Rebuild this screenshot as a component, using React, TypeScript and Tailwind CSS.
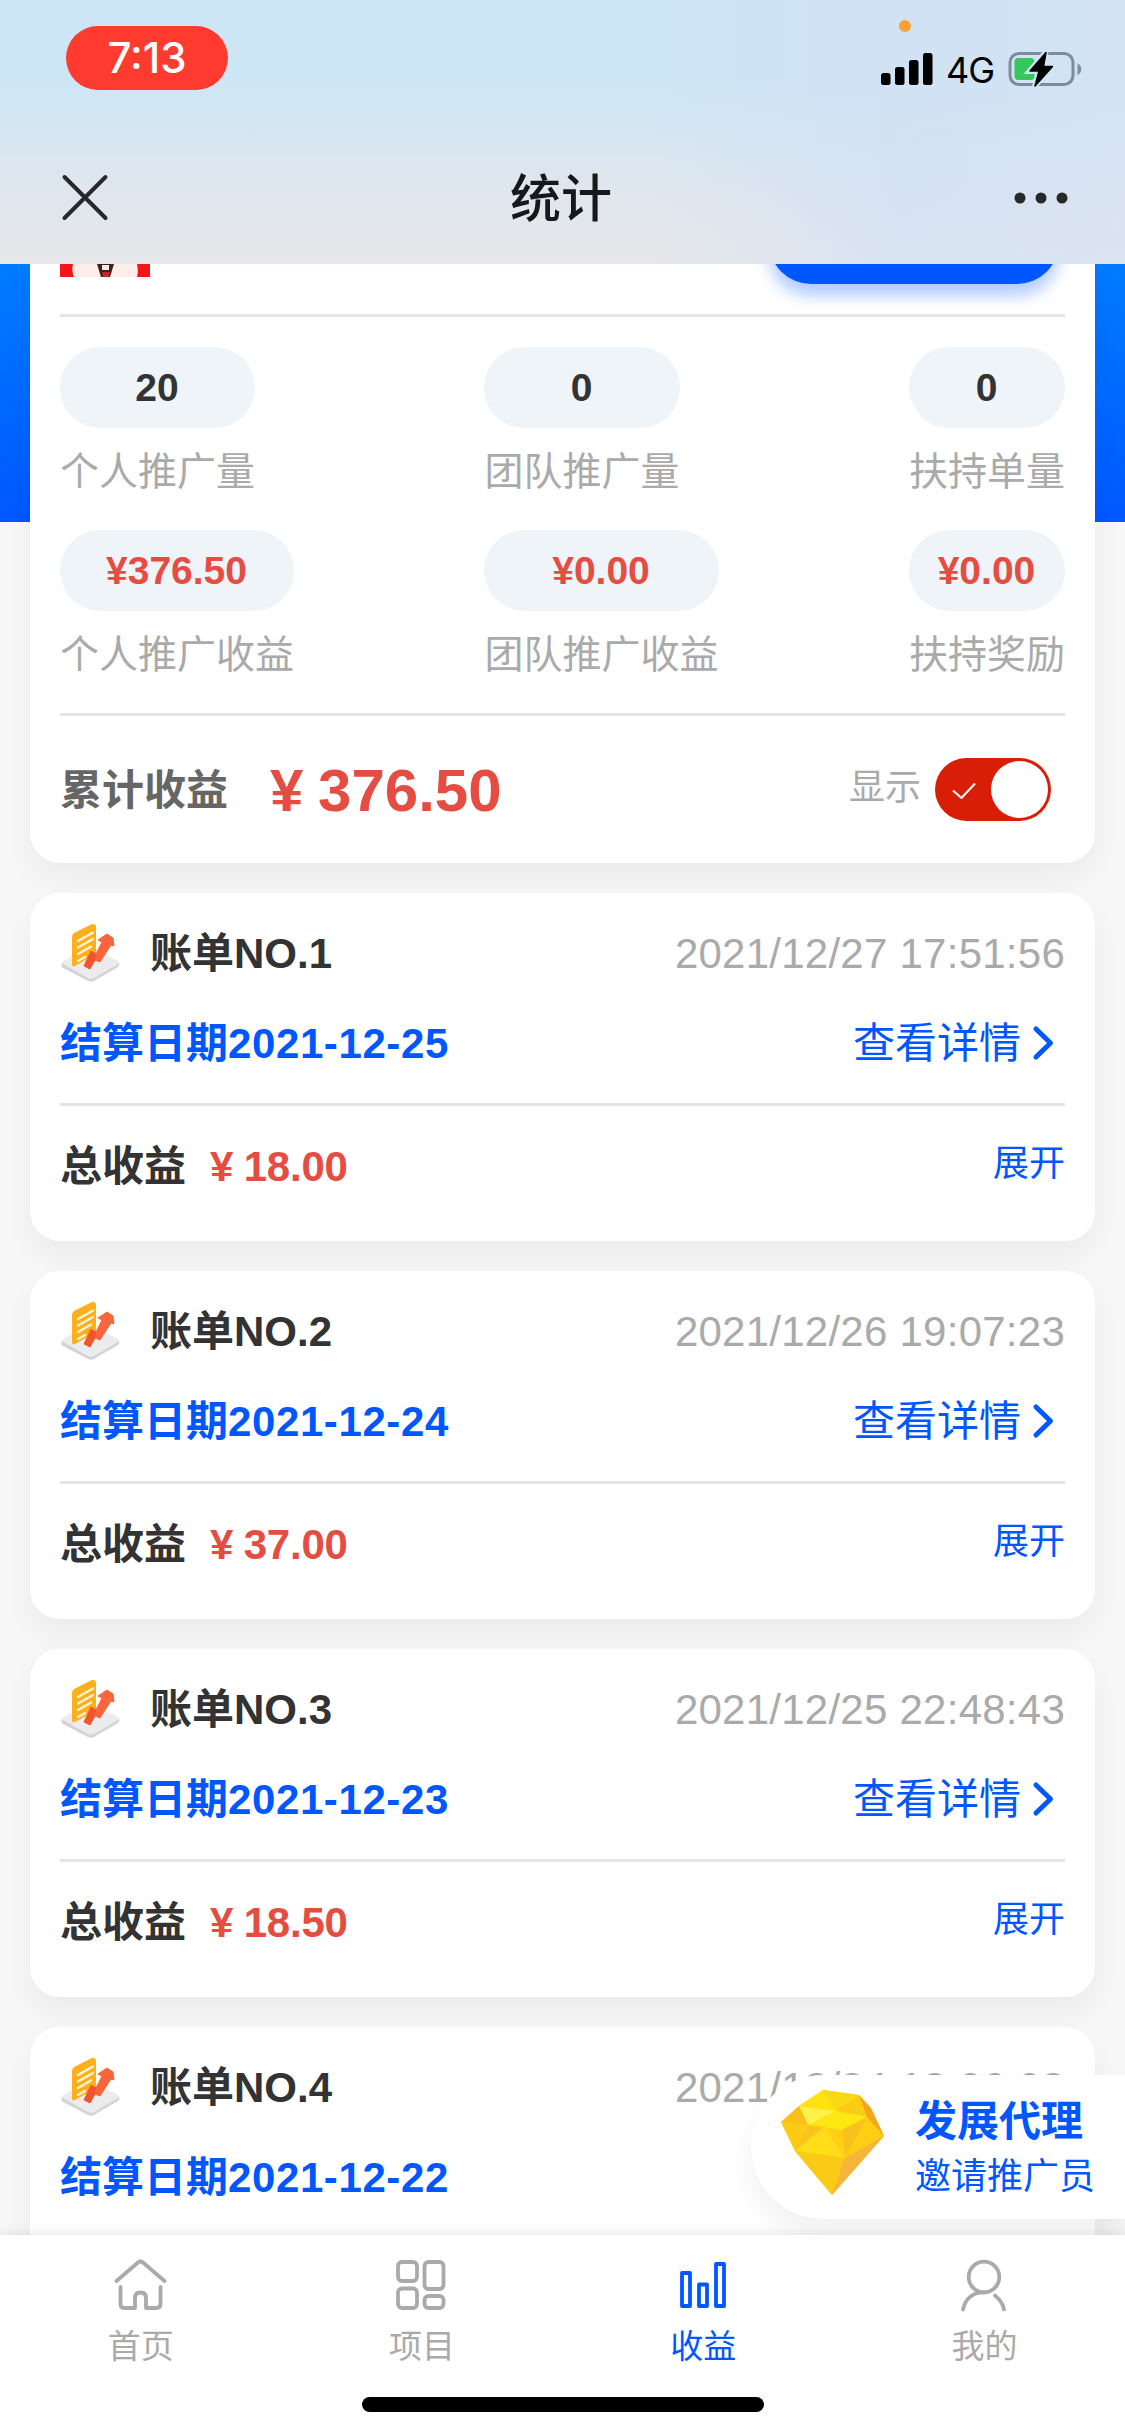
import type { ReactNode } from 'react';

interface Bill {
    no: number;
    time: string;
    date: string;
    total?: string;
}

const bills: Bill[] = [
    { no: 1, time: '2021/12/27 17:51:56', date: '2021-12-25', total: '18.00' },
    { no: 2, time: '2021/12/26 19:07:23', date: '2021-12-24', total: '37.00' },
    { no: 3, time: '2021/12/25 22:48:43', date: '2021-12-23', total: '18.50' },
    { no: 4, time: '2021/12/24 18:06:08', date: '2021-12-22' },
];

const stats = [
    { value: '20', label: '个人推广量', income: '¥376.50', incomeLabel: '个人推广收益' },
    { value: '0', label: '团队推广量', income: '¥0.00', incomeLabel: '团队推广收益' },
    { value: '0', label: '扶持单量', income: '¥0.00', incomeLabel: '扶持奖励' },
];

export default function App() {
    return (
        <div className="relative flex h-[2436px] w-[1125px] flex-col overflow-hidden bg-[#f7f7f7] font-['Liberation_Sans','Noto_Sans_CJK_SC',sans-serif] text-[42px] leading-none text-[#333]">
            <Header />

            {/* Scrolling content */}
            <main className="relative min-h-0 flex-1 overflow-hidden">
                <div className="absolute inset-x-0 top-0 h-[258px] bg-linear-to-b from-[#007bff] to-[#0057ff]" />
                <div className="relative flex flex-col gap-[30px] px-[30px]">
                    <SummaryCard />
                    {bills.map((bill) => (
                        <BillCard key={bill.no} {...bill} />
                    ))}
                </div>
            </main>

            <InviteFloat />
            <TabBar />
        </div>
    );
}

// ── Header ──────────────────────────────────────────────────

function Header() {
    return (
        <header className="relative z-10 flex h-[264px] shrink-0 flex-col bg-linear-to-b from-[#cde6f5] from-30% via-[#dfe6ee] via-72% to-[#e7e8ea]">
            <div className="absolute inset-x-0 bottom-0 h-[264px] bg-linear-to-r from-transparent from-58% via-[#d2e1f5]/70 via-80% to-[#d6e2f4]/70" />
            <div className="relative flex h-[132px] items-start justify-between pl-[66px] pr-[43px] font-['Inter',sans-serif] text-black">
                <div className="mt-[26px] flex h-16 w-[162px] items-center justify-center rounded-full bg-[#ff3b30] text-[42px] font-medium text-white">
                    7:13
                </div>
                <div className="absolute left-[899px] top-5 size-3 rounded-full bg-[#f7a233]" />
                <div className="mt-[51px] flex h-9 items-center">
                    <svg width="52" height="34" viewBox="0 0 52 34">
                        <rect x="0" y="21" width="9.5" height="12" rx="2.5" />
                        <rect x="14" y="15" width="9.5" height="18" rx="2.5" />
                        <rect x="28" y="8" width="9.5" height="25" rx="2.5" />
                        <rect x="42" y="1" width="9.5" height="32" rx="2.5" />
                    </svg>
                    <span className="ml-[13px] mr-3 w-[50px] pt-0.5 text-[36px] tracking-[-1px]">4G</span>
                    <svg width="74" height="38" viewBox="0 0 74 38">
                        <rect x="2" y="3.5" width="63" height="31" rx="9" fill="none" stroke="#7c8d98" strokeWidth="3" />
                        <path d="M69.500 13.500c5 2 5 9.500 0 11.500z" fill="#7c8d98" />
                        <rect x="6.5" y="8" width="20" height="22" rx="4" fill="#34c759" />
                        <path d="M38 1.500L21 21.500h9.500l-4 15L45.500 16h-9.500z" stroke="#cde6f5" strokeWidth="5" />
                        <path d="M38 2.500L22 21h9l-4 15L44.500 16.500h-9z" stroke="#000" strokeWidth="1.500" strokeLinejoin="round" />
                    </svg>
                </div>
            </div>
            <div className="relative flex h-[132px] items-center justify-between px-[57px]">
                <svg width="56" height="56" viewBox="0 0 56 56" stroke="#262829" strokeWidth="4" strokeLinecap="round">
                    <path d="M7.500 7l41 41M48.500 7l-41 41" />
                </svg>
                <h1 className="pr-[3px] pt-0.5 text-[51px] font-medium text-[#171819]">统计</h1>
                <svg width="56" height="12" viewBox="0 0 56 12" fill="#262829">
                    <circle cx="8" cy="6" r="5.500" />
                    <circle cx="29" cy="6" r="5.500" />
                    <circle cx="50" cy="6" r="5.500" />
                </svg>
            </div>
        </header>
    );
}

// ── Cards ───────────────────────────────────────────────────

function Card({ className = '', children }: { className?: string; children: ReactNode }) {
    return (
        <section className={`flex flex-col bg-white px-[30px] shadow-[0_15px_30px_rgba(0,0,0,0.05)] ${className}`}>
            {children}
        </section>
    );
}

function Divider() {
    return <div className="h-[3px] shrink-0 bg-[#e4e4e4]" />;
}

function SummaryCard() {
    return (
        <Card className="h-[599px] rounded-b-[30px]">
            <div className="flex h-[50px] shrink-0 items-start justify-between">
                {/* Bottom edge of the avatar, the rest is scrolled away */}
                <svg width="90" height="13" viewBox="0 0 90 13">
                    <rect width="90" height="13" fill="#f5141a" />
                    <path d="M13 0h64c1 5 1 9 0 13H14c-2-5-2-9-1-13z" fill="#fdeeec" />
                    <path d="M37 0h17l-4 13H41z" fill="#4a1d18" />
                    <path d="M42 8h8l-1.500 5h-5.500z" fill="#c22a26" />
                    <path d="M42 1h7v5h-7z" fill="#f3eee8" />
                </svg>
                <div className="mr-[6px] h-5 w-[290px]">
                    <div className="-mt-16 h-[84px] rounded-full bg-[#0057ff] shadow-[0_12px_15px_rgba(0,87,255,0.3)]" />
                </div>
            </div>
            <Divider />
            <div className="flex h-[396px] shrink-0 justify-between pt-[30px] text-[39px]">
                {stats.map((s) => (
                    <div key={s.label} className="flex flex-col items-start">
                        <Stat value={s.value} label={s.label} />
                        <Stat value={s.income} label={s.incomeLabel} money />
                    </div>
                ))}
            </div>
            <Divider />
            <div className="flex h-[147px] items-center">
                <span className="pt-[3px] font-bold text-[#666]">累计收益</span>
                <span className="ml-[42px] pt-[3px] text-[60px] font-bold text-[#e54d42] [word-spacing:-2px]">¥ 376.50</span>
                <span className="-mt-[3px] ml-auto mr-[14px] text-[36px] text-[#aaa]">显示</span>
                <Toggle />
            </div>
        </Card>
    );
}

function Stat({ value, label, money }: { value: string; label: string; money?: boolean }) {
    return (
        <div className="flex h-[183px] flex-col">
            <div className={`flex h-[81px] items-center justify-center rounded-full bg-[#eef4f7] pr-px font-bold ${money ? 'text-[#e54d42]' : ''}`}>
                {value}
            </div>
            <div className="mt-6 text-[#aaa]">{label}</div>
        </div>
    );
}

function Toggle() {
    return (
        <div className="mr-[14px] flex h-[63px] w-[116px] items-center justify-between rounded-full bg-[#d81e06] pl-[17px] pr-[3px]">
            <svg width="24" height="18" viewBox="0 0 24 18" fill="none" stroke="#fff" strokeWidth="2">
                <path d="M1 9.500l8.500 7.500L23 2.500" />
            </svg>
            <div className="size-[57px] rounded-full bg-white" />
        </div>
    );
}

function BillCard({ no, time, date, total }: Bill) {
    return (
        <Card className="h-[348px] shrink-0 rounded-[30px]">
            <div className="flex h-[120px] items-center">
                <BillIcon />
                <span className="ml-[30px] pt-0.5 font-bold">账单NO.{no}</span>
                <span className="ml-auto pt-0.5 tracking-[0.25px] text-[#aaa]">{time}</span>
            </div>
            <div className="flex h-[90px] items-start justify-between pt-[10px] text-[#0057ff]">
                <span className="font-bold">
                    结算日期<span className="tracking-[0.6px]">{date}</span>
                </span>
                {total && (
                    <span className="flex items-center">
                        查看详情
                        <svg className="ml-[11px] mr-[9px]" width="24" height="38" viewBox="0 0 24 38" fill="none" stroke="#0057ff" strokeWidth="5" strokeLinecap="round" strokeLinejoin="round">
                            <path d="M4 4L18.500 18 4 32" />
                        </svg>
                    </span>
                )}
            </div>
            {total && (
                <>
                    <Divider />
                    <div className="flex h-[120px] items-center">
                        <span className="pt-0.5 font-bold">总收益</span>
                        <span className="ml-6 pt-0.5 font-bold text-[#e54d42] tracking-[-0.2px] [word-spacing:-1px]">¥ {total}</span>
                        <span className="-mt-1 ml-auto text-[36px] text-[#0057ff]">展开</span>
                    </div>
                </>
            )}
        </Card>
    );
}

function BillIcon() {
    return (
        <svg width="60" height="66" viewBox="0 0 60 66">
            <path d="M2 43L30 28l28 14c2 1 2 3 0 5L34 61c-2 1-4 1-6 0L3 48c-2-1-2-4-1-5z" fill="#d4d4d8" />
            <path d="M3 41L30 27l28 14c1 1 1 2 0 3L34 58c-2 1-4 1-6 0L3 44c-1-1-1-2 0-3z" fill="#ececef" />
            <path d="M12 17c0-2 1-3 2-4L31 4.500c3-1 5 0 5 2.500v27L15 46c-2 1-3 0-3-2z" fill="#fdb01c" />
            <path d="M18 21l15-8.500M18 27.500l15-8.500M18 34l13-7.500M18 41l7-4" stroke="#fff6dc" strokeWidth="2.200" strokeLinecap="round" />
            <path d="M24 46l7-15 5 3 6-12-4-2 9-6 6 4 1 8-3-1-11 17-5-2-5 9z" fill="#f9663b" stroke="#f9663b" strokeWidth="1" />
            <path d="M24 46l7-15 5 3-1 6-5 9z" fill="#ef5630" />
        </svg>
    );
}

// ── Floating invite entry ───────────────────────────────────

function InviteFloat() {
    return (
        <div className="absolute bottom-[217px] right-0 flex h-36 w-[374px] items-center rounded-l-full bg-white pl-[30px] text-[#0057ff] shadow-[0_15px_30px_rgba(0,0,0,0.06)]">
            <svg className="-mt-2" width="104" height="108" viewBox="0 0 104 108">
                <path d="M42 1l36 5 12 13 13 28-52 59-37-44L0 33l18-16z" fill="#fdd213" />
                <path d="M42 1L18 17l37 5z" fill="#ffe20f" />
                <path d="M42 1l36 5-23 16z" fill="#fbd814" />
                <path d="M78 6l8 22-31-6z" fill="#fccb14" />
                <path d="M18 17l37 5-28 14z" fill="#fff04a" />
                <path d="M55 22l31 6-25 13-34-5z" fill="#ffe812" />
                <path d="M18 17L0 33l27 3z" fill="#fbc018" />
                <path d="M0 33l27 3-13 26z" fill="#fccb15" />
                <path d="M27 36l16 2-29 24z" fill="#fbc41c" />
                <path d="M43 38l21 31-50-7z" fill="#ffdd18" />
                <path d="M43 38l18 3 3 28z" fill="#ffd016" />
                <path d="M61 41l25-13-22 41z" fill="#fac01c" />
                <path d="M86 28l17 19-39 22z" fill="#ffce14" />
                <path d="M78 6l12 13 13 28-17-19z" fill="#f5a51e" />
                <path d="M14 62l50 7-13 37z" fill="#f9cb16" />
                <path d="M103 47L64 69l-13 37z" fill="#f5b53a" />
            </svg>
            <div className="ml-[30px] flex flex-col gap-4 pt-0.5">
                <span className="font-bold">发展代理</span>
                <span className="text-[36px]">邀请推广员</span>
            </div>
        </div>
    );
}

// ── Tab bar ─────────────────────────────────────────────────

function TabBar() {
    return (
        <nav className="relative flex h-[201px] shrink-0 flex-col items-center bg-white shadow-[0_0_12px_rgba(0,0,0,0.12)]">
            <div className="flex h-[162px] w-full">
                <Tab label="首页">
                    <path d="M2.500 22L24 3.500Q26.500 1.500 29 3.500L50.500 22M6.500 28v17q0 4 4 4h10.500V39q0-5.500 5.500-5.500t5.500 5.500v10h10.500q4 0 4-4V28" />
                </Tab>
                <Tab label="项目">
                    <rect x="3" y="3" width="19" height="19" rx="4" />
                    <rect x="3" y="29.500" width="19" height="19.500" rx="4" />
                    <rect x="29.500" y="3" width="19" height="27" rx="4" />
                    <rect x="29.500" y="37" width="19" height="12" rx="4" />
                </Tab>
                <Tab label="收益" active>
                    <rect x="6" y="14" width="8" height="33" />
                    <rect x="23" y="25.500" width="8" height="21.500" />
                    <rect x="40" y="5" width="8" height="42" />
                </Tab>
                <Tab label="我的">
                    <circle cx="27" cy="18" r="15.300" />
                    <path d="M27 33.500C16 33 8 40 6 50.500M38 36.500c5 4 8 8 9 14" />
                </Tab>
            </div>
            <div className="h-[15px] w-[402px] rounded-full bg-black" />
        </nav>
    );
}

function Tab({ label, active, children }: { label: string; active?: boolean; children: ReactNode }) {
    return (
        <div className={`flex flex-1 flex-col items-center pt-6 text-[33px] ${active ? 'text-[#0057ff]' : 'text-[#aaa]'}`}>
            <svg width="54" height="54" viewBox="0 0 54 54" fill="none" stroke="currentColor" strokeWidth="3.8" strokeLinecap="round" strokeLinejoin="round">
                {children}
            </svg>
            <span className="mt-[17px]">{label}</span>
        </div>
    );
}
